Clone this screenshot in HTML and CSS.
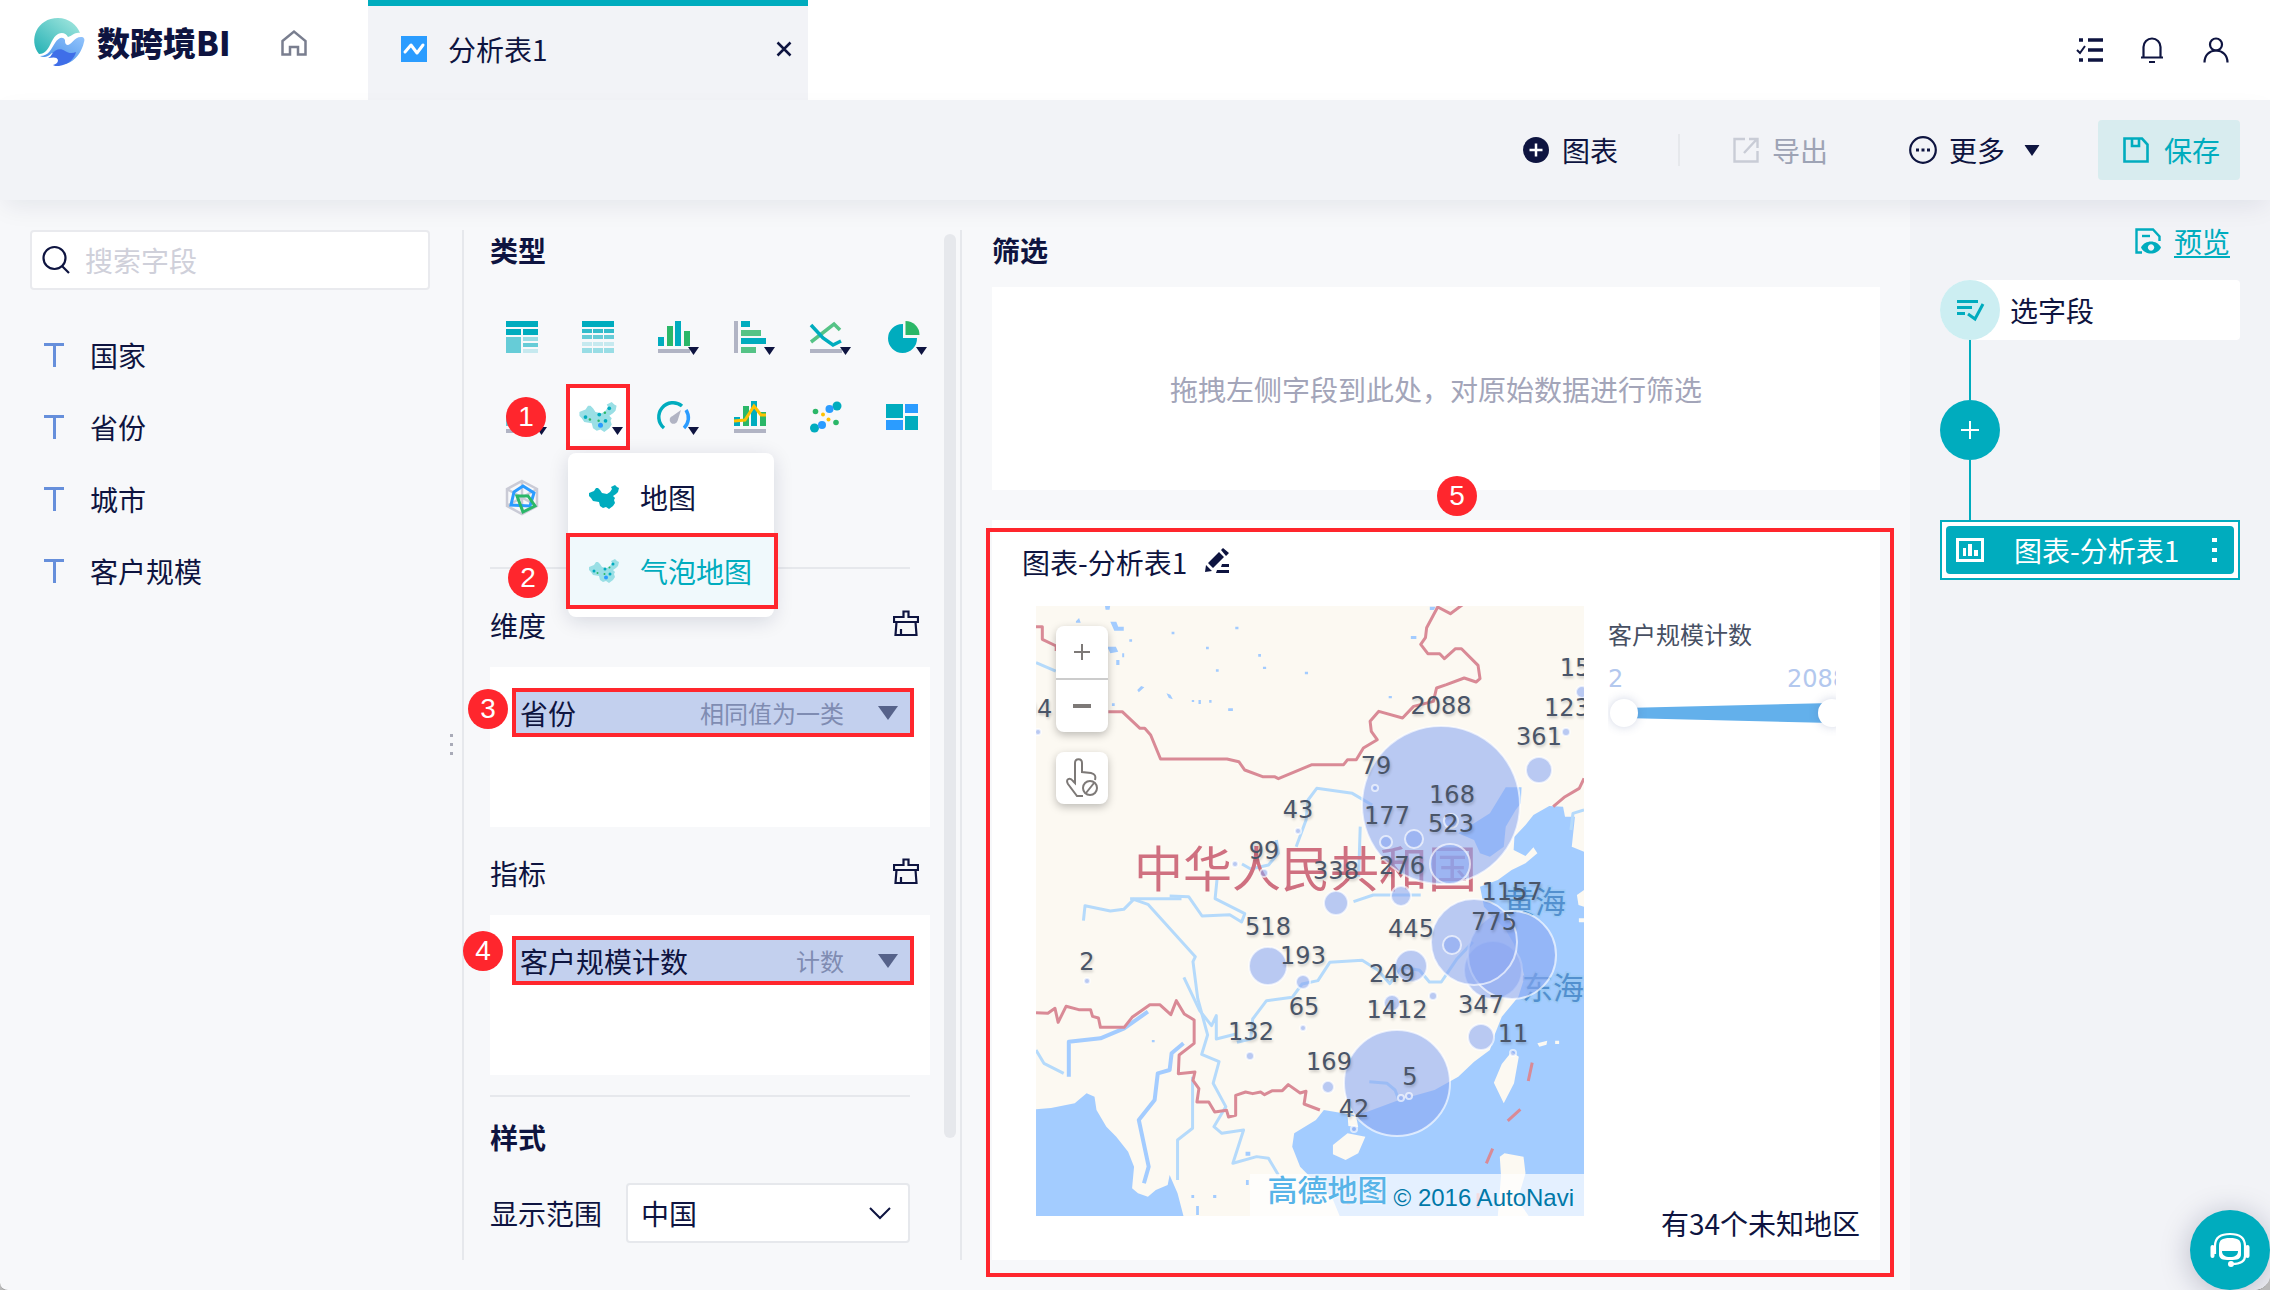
FILE: index.html
```html
<!DOCTYPE html>
<html lang="zh-CN">
<head>
<meta charset="utf-8">
<title>分析表1 - 数跨境BI</title>
<link rel="stylesheet" href="styles.css">
</head>
<body>
<svg class="defs" aria-hidden="true">
  <symbol id="china" viewBox="0 0 30 24"><path d="M0 8 5 6 7 3 9 3 11 5 13 8 18 9 21 7 23 4 22 2 26 0 28 2 30 3 29 7 27 9 24 11 26 13 25 15 26 18 24 21 20 24 17 22 14 23 11 21 10 17 4 16 2 13 0 11Z"/></symbol>
  <symbol id="bubbles" viewBox="0 0 30 24"><use href="#china" width="30" height="24" fill="#9adfe5"/><g fill="#00acbe"><circle cx="5" cy="12" r="1.500"/><circle cx="16" cy="10" r="1.500"/><circle cx="24" cy="5" r="1.500"/><circle cx="21" cy="15" r="1.500"/></g><g fill="#2bb768"><circle cx="8.500" cy="14" r="1"/><circle cx="20.500" cy="8.500" r="1"/><circle cx="15.500" cy="15" r="1"/></g><circle cx="17" cy="18.500" r="2" fill="#2b9cff"/></symbol>
  <symbol id="brush" viewBox="0 0 26 26"><path d="M10.500 7V1.500h5V7H25v5H1V7ZM3.500 12 2.500 25h21l-1-13M8 25v-6" fill="none" stroke="#0e1440" stroke-width="2.200"/></symbol>
  <symbol id="caret" viewBox="0 0 11 8"><path d="M0 0h11L5.500 8Z" fill="#0e1440"/></symbol>
</svg>
<div class="app">
  <header class="topbar">
    <div class="brand">
      <svg width="50" height="48" viewBox="0 0 50 48" aria-hidden="true">
        <defs>
          <linearGradient id="lg1" x1="0" y1="1" x2="1" y2="0"><stop offset="0" stop-color="#22b0b4"/><stop offset="1" stop-color="#a9e9e0"/></linearGradient>
          <linearGradient id="lg2" x1="0" y1="1" x2="1" y2="0"><stop offset="0" stop-color="#3f8be6"/><stop offset="1" stop-color="#93c4fc"/></linearGradient>
        </defs>
        <path d="M24 0C35 0 43 7 46 15c-5-1-8 3-12 4-2-4-6-5-10-3-6 3-7 12-12 17-2 2-4 3-7 3C-6 22 3 0 24 0Z" fill="url(#lg1)"/>
        <path d="M6 38c9 0 11-7 15-13 3-5 8-7 10-3 0 2 0 4 2 5 5 0 7-8 14-8 3 0 4 2 3 5-2 9-8 19-18 22l-4-8-10-3c-4 4-8 5-12 3Z" fill="url(#lg2)"/>
        <path d="M18 36c3-5 9-6 13-3 3 2 7 3 11 1-1 6-8 13-17 14-3 0-5 0-6-1 3-1 5-2 5-5-1-3-4-3-10-2 2-1 3-2 4-4Z" fill="#3f6ee8"/>
      </svg>
      <span class="brand-name">数跨境BI</span>
    </div>
    <a class="home" href="#" aria-label="首页"><svg width="26" height="26" viewBox="0 0 26 26"><path d="M1.500 11 13 1.500 24.500 11v13.500H17V17H9v7.500H1.500Z" fill="none" stroke="#797e8f" stroke-width="2.500"/></svg></a>
    <div class="tab">
      <svg width="26" height="26" viewBox="0 0 26 26"><path d="M0 0h26v26H0Z" fill="#2b9cff"/><path d="m4 16 6-7 6 8 6-8" fill="none" stroke="#fff" stroke-width="3" stroke-linecap="round" stroke-linejoin="round"/></svg>
      <span>分析表1</span>
      <button class="close" aria-label="关闭"><svg width="16" height="16" viewBox="0 0 16 16"><path d="m1.500 1.500 13 13m0-13-13 13" stroke="#0e1440" stroke-width="2.500"/></svg></button>
    </div>
    <nav class="tools">
      <button aria-label="任务"><svg width="26" height="26" viewBox="0 0 26 26" fill="none" stroke="#0e1440"><path d="M11 3h15M11 13h15M11 23h15" stroke-width="3.500"/><path d="M2 3h4M2 23h4" stroke-width="3.500"/><path d="m0 13 3 3 5-7" stroke-width="2"/></svg></button>
      <button aria-label="通知"><svg width="26" height="26" viewBox="0 0 26 26" fill="none" stroke="#0e1440" stroke-width="2.200"><path d="M1 20.500h22M3.500 20V10a8.500 8.500 0 0 1 17 0v10M9 25h6"/></svg></button>
      <button aria-label="用户"><svg width="26" height="26" viewBox="0 0 26 26" fill="none" stroke="#0e1440" stroke-width="2.200"><circle cx="13" cy="7.500" r="6"/><path d="M1.500 25.500c0-7.500 5-12 11.500-12s11.500 4.500 11.500 12"/></svg></button>
    </nav>
  </header>

  <div class="toolbar">
    <button class="tb add"><svg width="26" height="26" viewBox="0 0 26 26"><circle cx="13" cy="13" r="13" fill="#0e1440"/><path d="M13 6.500v13M6.500 13h13" stroke="#fff" stroke-width="2.500"/></svg>图表</button>
    <span class="tb-sep"></span>
    <button class="tb export" disabled><svg width="26" height="26" viewBox="0 0 26 26" fill="none" stroke="#c9ccd6" stroke-width="2.400"><path d="M12 2H1.500v22.500H24.500V14M16 2h8.500v9M24 2 11 16"/></svg>导出</button>
    <button class="tb more"><svg width="28" height="28" viewBox="0 0 28 28"><circle cx="14" cy="14" r="12.800" fill="none" stroke="#0e1440" stroke-width="2.200"/><path d="M7 12.500h3v3H7Zm5.500 0h3v3h-3Zm5.500 0h3v3h-3Z" fill="#0e1440"/></svg>更多<svg class="more-caret" width="16" height="11" viewBox="0 0 11 8"><use href="#caret"/></svg></button>
    <button class="save"><svg width="26" height="26" viewBox="0 0 26 26" fill="none" stroke="#00acbe" stroke-width="2.600"><path d="M1.500 1.500H19l5.500 6v17h-23ZM9 2v7h7V2"/></svg>保存</button>
  </div>

  <main class="workspace">
    <aside class="fields">
      <label class="search"><svg width="28" height="28" viewBox="0 0 28 28" fill="none" stroke="#0e1440" stroke-width="2.200"><circle cx="12.500" cy="12" r="11"/><path d="m20 20 7 7"/></svg><input type="text" placeholder="搜索字段" aria-label="搜索字段"></label>
      <ul>
        <li><i></i>国家</li>
        <li><i></i>省份</li>
        <li><i></i>城市</li>
        <li><i></i>客户规模</li>
      </ul>
      <span class="splitter"></span>
    </aside>

    <section class="config">
      <div class="config-body">
        <h2>类型</h2>
        <div class="types">
          <button aria-label="透视表"><svg viewBox="0 0 32 32"><path d="M0 0h32v6H0Zm0 8h15v6H0Zm17 0h15v6H17Z" fill="#00acbe"/><path d="M0 16h15v16H0Z" fill="#66ccd7"/><path d="M17 16h15v4H17Z" fill="#99dde5"/><path d="M17 22h15v4H17Z" fill="#66ccd7"/><path d="M17 28h15v4H17Z" fill="#c6e9ef"/></svg></button>
          <button aria-label="明细表"><svg viewBox="0 0 32 32"><path d="M0 0h32v6H0Z" fill="#00acbe"/><path d="M0 8h10v4H0Zm11 0h10v4H11Zm11 0h10v4H22Z" fill="#33bccb"/><path d="M0 14h10v4H0Zm11 0h10v4H11Zm11 0h10v4H22Z" fill="#66ccd7"/><path d="M0 21h10v4H0Zm11 0h10v4H11Zm11 0h10v4H22Z" fill="#c6e9ef"/><path d="M0 27h10v5H0Zm11 0h10v5H11Zm11 0h10v5H22Z" fill="#99dde5"/></svg></button>
          <button aria-label="柱状图"><svg viewBox="0 0 32 32"><path d="M0 28h32v4H0Z" fill="#b1b4c4"/><path d="M0 16h6v9H0ZM17 0h6v25h-6Z" fill="#00acbe"/><path d="M9 5h6v20H9Zm17 5h6v15h-6Z" fill="#2bb768"/><use href="#caret" x="30" y="26" width="11" height="8"/></svg></button>
          <button aria-label="条形图"><svg viewBox="0 0 32 32"><path d="M0 0h4v32H0Z" fill="#b1b4c4"/><path d="M7 0h9v6H7Zm0 17h25v6H7Z" fill="#00acbe"/><path d="M7 9h20v6H7Zm0 17h15v6H7Z" fill="#55c386"/><use href="#caret" x="30" y="26" width="11" height="8"/></svg></button>
          <button aria-label="折线图"><svg viewBox="0 0 32 32"><path d="M0 28h32v4H0Z" fill="#b1b4c4"/><path d="M1 21 24 3l6 6" fill="none" stroke="#55c386" stroke-width="3.500"/><path d="m1 4 12 13 10 7 8-4" fill="none" stroke="#00acbe" stroke-width="3.500"/><use href="#caret" x="30" y="26" width="11" height="8"/></svg></button>
          <button aria-label="饼图"><svg viewBox="0 0 32 32"><path d="M17 3v14h14A14.500 14.500 0 1 1 17 3Z" fill="#00acbe"/><path d="M19.500 0A14 14 0 0 1 33.500 14h-14Z" fill="#2bb768"/><use href="#caret" x="30" y="26" width="11" height="8"/></svg></button>
          <button aria-label="面积图"><svg viewBox="0 0 32 32"><path d="M0 28h32v4H0Z" fill="#b1b4c4"/><path d="M0 25V14l10-8 12 9 10-6v16Z" fill="#66ccd7"/><use href="#caret" x="30" y="26" width="11" height="8"/></svg><span class="badge b1">1</span></button>
          <button class="selected" aria-label="地图"><svg viewBox="0 0 32 32"><use href="#bubbles" x="-3" y="1" width="38" height="30"/><use href="#caret" x="30" y="26" width="11" height="8"/></svg></button>
          <button aria-label="仪表盘"><svg viewBox="0 0 32 32"><path d="M6 27A14 14 0 0 1 24 5" fill="none" stroke="#00acbe" stroke-width="3.500"/><path d="M28 9a14 14 0 0 1-2 18" fill="none" stroke="#2b9cff" stroke-width="3.500"/><path d="m23 9-3.500 11a4 4 0 1 1-5-5Z" fill="#b1b4c4"/><use href="#caret" x="30" y="26" width="11" height="8"/></svg></button>
          <button aria-label="组合图"><svg viewBox="0 0 32 32"><path d="M0 28h32v4H0Z" fill="#b1b4c4"/><path d="M0 16h6v9H0ZM17 0h6v25h-6Z" fill="#00acbe"/><path d="M9 5h6v20H9Zm17 6h6v14h-6Z" fill="#2bb768"/><path d="m0 20 11-1 9-14 7 9h5" fill="none" stroke="#ffc100" stroke-width="3"/></svg></button>
          <button aria-label="散点图"><svg viewBox="0 0 32 32"><g fill="#00acbe"><circle cx="27" cy="5" r="4.500"/><circle cx="4.500" cy="27" r="4.500"/></g><g fill="#2b9cff"><circle cx="19.500" cy="8" r="4"/><circle cx="12" cy="24" r="4"/></g><g fill="#2bb768"><circle cx="5.500" cy="10.500" r="2.800"/><circle cx="26" cy="21.500" r="2.800"/></g><g fill="#ffc100"><circle cx="13" cy="13.500" r="2"/><circle cx="18.500" cy="18.500" r="2"/></g></svg></button>
          <button aria-label="树图"><svg viewBox="0 0 32 32"><path d="M0 3h17v14H0Zm19 12h13v14H19Z" fill="#00acbe"/><path d="M19 3h13v9H19ZM0 19h17v10H0Z" fill="#2b9cff"/></svg></button>
          <button aria-label="雷达图"><svg viewBox="0 0 32 32" fill="none"><path d="M16 0 31 8v17l-15 8L1 25V8ZM16 0v33M1 8l30 17M31 8 1 25" stroke="#cacbd6" stroke-width="2.500"/><path d="m17 5 11 7-4 13-19-1L8 11Z" stroke="#2b9cff" stroke-width="3"/><path d="m11 15 11 0 7 10-12 6Z" stroke="#2bb768" stroke-width="3"/></svg></button>
        </div>
        <div class="menu">
          <button class="menu-item"><svg width="30" height="24"><use href="#china" fill="#00acbe"/></svg>地图</button>
          <button class="menu-item active"><svg width="30" height="24"><use href="#bubbles"/></svg>气泡地图</button>
          <span class="badge b2">2</span>
        </div>
        <hr class="rule-a">
        <div class="drop-head first"><h3>维度</h3><button aria-label="清空维度"><svg width="26" height="26"><use href="#brush"/></svg></button></div>
        <div class="drop"><div class="chip"><span>省份</span><em>相同值为一类</em><svg width="20" height="14" viewBox="0 0 20 14"><path d="M0 0h20L10 14Z" fill="#56628a"/></svg><span class="badge b3">3</span></div></div>
        <div class="drop-head"><h3>指标</h3><button aria-label="清空指标"><svg width="26" height="26"><use href="#brush"/></svg></button></div>
        <div class="drop"><div class="chip"><span>客户规模计数</span><em>计数</em><svg width="20" height="14" viewBox="0 0 20 14"><path d="M0 0h20L10 14Z" fill="#56628a"/></svg><span class="badge b4">4</span></div></div>
        <hr class="rule-b">
        <h2>样式</h2>
        <div class="range-row">
          <label for="scope">显示范围</label>
          <div class="select"><select id="scope"><option>中国</option></select><svg width="22" height="12" viewBox="0 0 22 12"><path d="m1 1 10 10L21 1" fill="none" stroke="#0e1440" stroke-width="2"/></svg></div>
        </div>
      </div>
      <span class="thumb"></span>
    </section>

    <section class="canvas">
      <h2>筛选</h2>
      <div class="filter">拖拽左侧字段到此处，对原始数据进行筛选</div>
      <article class="chart">
        <span class="badge b5">5</span>
        <div class="chart-head"><h3>图表-分析表1</h3><button aria-label="重命名"><svg width="26" height="26" viewBox="0 0 26 26" fill="#0e1440"><path d="M3 15 14 4l5 5L8 20ZM16 2l2-2 6 5-3 3ZM0 24l1-7 6 6ZM12 22h12v3H11ZM17 16h7v3h-8Z"/></svg></button></div>
        <div class="chart-body">
          <div class="map">
            <svg class="tiles" viewBox="0 0 548 610" aria-label="客户规模气泡地图">
              <g transform="translate(-56.150 274) scale(.3954 .3333)" class="geo">
                <g fill="#a3ccff">
                  <path d="M142 688 180 684 240 670 270 640 290 650 295 690 320 740 345 770 375 815 390 860 385 925 400 940 425 950 445 930 475 915 480 885 500 940 515 1008H142Z"/>
                  <path d="M1528-85 1497-100 1505-190 1480-190 1475-220 1440-222 1400-195 1380-165 1352-130 1350-90 1380-72 1400-98 1410-80 1380-50 1345-30 1310 0 1265 20 1275 80 1330 150 1350 190 1365 240 1378 290 1362 350 1320 410 1300 470 1290 510 1250 545 1210 590 1150 630 1060 660 980 695 945 705 870 690 850 720 795 760 790 800 810 860 860 920 890 950 910 1008H1528Z"/>
                  <path d="M1330-278 1370-278 1368-230 1355-210 1330-160 1325-100 1290-70 1265-80 1250-120 1210-140 1250-170 1290-200Z"/>
                  <path d="M330-775h15l5 15h14v12h-24ZM316-826h14l-2 15h-10ZM243-776l8-10 4 14h-12ZM322-700h22l6 15-20 5ZM398-570l10-12 8 4-14 15ZM472-560l10 4 6 14-10-4ZM345-660h8v15h-8ZM360-680h5v12h-5ZM1090-732h14v9h-14ZM1138-820h15l-5 10h-10ZM628-515h12v8h-12ZM553-540h6v12h-6ZM646-760h8v8h-8ZM572-700h7v8h-7ZM704-678h7v8h-7ZM716-640h8v7h-8ZM597-632h7v7h-7ZM822-625h8v8h-8ZM485-745h7v8h-7ZM378-722h7v7h-7ZM536-540h6v6h-6ZM580-540h6v8h-6ZM1034-552h8v7h-8ZM334-530h7v8h-7ZM547 978h7v27h-7ZM535 945h7v9h-7ZM590 945h8v9h-8ZM672 815h12v12h-12ZM673 900h7v15h-7ZM435 480h7v7h-7Z"/>
                </g>
                <g fill="#fcf9f2">
                  <path d="m893 795 37-35 45 10-18 50-32 20-32-17ZM930 705l22 5 5 32-25-4ZM1345 515l18 15-12 80-26 60-25-62 20-56ZM1315 830l12-10 48 10 5 50-20 80 28 48h-78l8-120ZM1410 490l25-8-2 12-18 6ZM1455 482h10v10h-10ZM1510 45l18-15v50l-14-5ZM1515 115h13v12h-13Z"/>
                </g>
                <g class="river">
                  <path d="m262 122 4-45 64 16 34-5 25-30 36 15L545 230l-6 15 12 110 25 110-15 58 44 22-15 65 32 70-30 60 20 20 55-10-27 100 60-20 30 5 25 50"/>
                  <path d="m480 48 48 2 34 58 70-4 30 22 8-25-75-45 5-60"/>
                  <path d="m516 292 40 100 30 45 12-30v70l50-15M650 487l35-10 5-60 35-55 65-10 25-40 40-10 30-55 82-6 40 30 30 40 30-50 45 10 25 35h30l40-70 40-50"/>
                  <path d="m800-100 25-80 5-60 22-35 90 15 50 35M958-10l4-150M750-120l5 40-25 35-45 12-22-15M945 65l50-20h120M380 56h130"/>
                  <path d="m142-652 50 25M1495-150l5-50 28-10M142 510l20 40 50 30M500 900V780l38-35V590M985 605l45 5 20 20 10 30"/>
                  <path class="wide" d="m225 590 0-105 80-10 60-30 60-50M415 910l12-50-25-140 40-60 8-80 30-10 5-50 30-30"/>
                </g>
                <g class="border">
                  <path d="M142-760h16v38l35 20v15M325-505h35l45 50h12l15 20 25 72h168l30 8 15 25 45 20h30l10 6 85-42h80l10-15h22l18-35 35-25-15-25-3-30 22-30 60 20 28-35 50-15 8-40 25-10 45-20 30 12 10-10-5-40-42-50h-15l-28 30-12-15h-30l-18-28 12-20 3-30 28-62 32 20 40-35h25"/>
                  <path d="m142 398 30 2 18-15 8 42 20-48 32 10h30l5 20 15 5 5 28h60l20-30 45-38h25l28 30 14-42 20 40 25 18v70l-38 35-2 56 42-5-5 25 15 25-5 40h30l15 30 30-5 5 20 18-5v-60l25-10 18 5 20-5 10 8 20-12h25l15-18 30 25 15-5-5 38 40 18"/>
                  <path d="m1528-305-12 30-36 25-30 30M1397 548l-10 55M1367 688l-32 35M1297 806l-16 44M932 960v15M1260 940v45"/>
                </g>
              </g>
              <g class="place">
                <text x="98" y="281" class="country">中华人民共和国</text>
                <text x="468" y="307" class="sea">黄海</text>
                <text x="486" y="393" class="sea">东海</text>
              </g>
              <g class="bubble">
                <circle cx="405" cy="199" r="79"/><circle cx="339" cy="182" r="3"/><circle cx="415" cy="215" r="7"/><circle cx="350" cy="236" r="6"/><circle cx="378" cy="233" r="9"/><circle cx="414" cy="258" r="20"/><circle cx="503" cy="164" r="13"/><circle cx="530" cy="126" r="4"/><circle cx="546" cy="86" r="6"/><circle cx="2" cy="126" r="3"/><circle cx="262" cy="225" r="3"/><circle cx="199" cy="258" r="3"/><circle cx="228" cy="267" r="4"/><circle cx="300" cy="297" r="12"/><circle cx="365" cy="290" r="10"/>
                <circle cx="457" cy="364" r="29"/><circle cx="476" cy="349" r="44"/><circle cx="438" cy="336" r="43"/><circle cx="416" cy="339" r="9"/><circle cx="232" cy="360" r="19"/><circle cx="267" cy="376" r="7"/><circle cx="375" cy="360" r="16"/><circle cx="356" cy="397" r="8"/><circle cx="397" cy="390" r="4"/><circle cx="51" cy="375" r="3"/><circle cx="267" cy="422" r="3"/><circle cx="214" cy="450" r="4"/><circle cx="445" cy="431" r="13"/><circle cx="477" cy="447" r="3"/><circle cx="361" cy="477" r="53"/><circle cx="292" cy="481" r="6"/><circle cx="365" cy="492" r="3"/><circle cx="373" cy="490" r="3"/><circle cx="318" cy="523" r="3"/>
              </g>
              <g class="value">
                <text x="405" y="108">2088</text><text x="340" y="168">79</text><text x="416" y="197">168</text><text x="351" y="218">177</text><text x="415" y="226">523</text><text x="262" y="212">43</text><text x="228" y="253">99</text><text x="300" y="273">338</text><text x="366" y="268">276</text><text x="503" y="139">361</text><text x="539" y="70">15</text><text x="531" y="110">123</text><text x="1" y="111">94</text><text x="476" y="294">1157</text><text x="458" y="324">775</text><text x="232" y="329">518</text><text x="375" y="331">445</text><text x="267" y="358">193</text><text x="51" y="364">2</text><text x="356" y="376">249</text><text x="361" y="412">1412</text><text x="445" y="407">347</text><text x="268" y="409">65</text><text x="477" y="436">11</text><text x="215" y="434">132</text><text x="293" y="464">169</text><text x="374" y="479">5</text><text x="318" y="511">42</text>
              </g>
            </svg>
            <div class="map-tools">
              <div class="zoom">
                <button aria-label="放大"><svg width="16" height="18" viewBox="0 0 16 18"><path d="M8 1v16M0 9h16" stroke="#7d7977" stroke-width="2"/></svg></button>
                <button aria-label="缩小"><svg width="18" height="18" viewBox="0 0 18 18"><path d="M0 9h18" stroke="#7d7977" stroke-width="4"/></svg></button>
              </div>
              <button class="hand" aria-label="禁用拖动"><svg width="32" height="40" viewBox="0 0 32 40" fill="none" stroke="#7d7977" stroke-width="2"><path d="M17 38H11L2 26c-3-5 2-7 5-3l2 2V5c0-5 7-5 7 0v9l9 1c4 1 5 3 4 7"/><circle cx="24" cy="30" r="7"/><path d="m20 35 8-10"/></svg></button>
            </div>
            <div class="credit"><span>高德地图</span><a href="#">© 2016 AutoNavi</a></div>
          </div>
          <div class="side-info">
            <div class="legend">
              <h4>客户规模计数</h4>
              <div class="legend-values"><span>2</span><span>2088</span></div>
              <div class="legend-range">
                <div class="wedge"></div>
                <input type="range" min="2" max="2088" value="2" aria-label="最小值">
                <input type="range" min="2" max="2088" value="2088" aria-label="最大值">
              </div>
            </div>
            <p>有34个未知地区</p>
          </div>
        </div>
      </article>
    </section>

    <aside class="steps">
      <div class="preview"><svg width="26" height="26" viewBox="0 0 26 26"><path d="M7 24.500H1.500v-23H18l6.500 7V13" fill="none" stroke="#00acbe" stroke-width="2.400"/><path d="M7 8h8" stroke="#00acbe" stroke-width="2.400"/><path d="M6 19.500c4-8 16-8 20 0-4 8-16 8-20 0Zm10-3.200a3.200 3.200 0 1 0 .1 0Z" fill="#00acbe" fill-rule="evenodd"/></svg><a href="#">预览</a></div>
      <button class="step pick"><span class="dot"><svg width="28" height="20" viewBox="0 0 28 20" fill="none" stroke="#00acbe" stroke-width="3"><path d="M1 1.500h21M1 7.500h15M1 13.500h8M12 14l7 5 8-15"/></svg></span>选字段</button>
      <span class="link"></span>
      <button class="step add-step" aria-label="添加步骤"><svg width="18" height="18" viewBox="0 0 18 18"><path d="M9 0v18M0 9h18" stroke="#fff" stroke-width="2"/></svg></button>
      <span class="link"></span>
      <button class="step current"><span class="current-in"><svg width="28" height="24" viewBox="0 0 28 24"><path d="M1.500 1.500h25v21h-25Z" fill="none" stroke="#fff" stroke-width="3"/><path d="M7 10h3v8H7Zm5-4h4v12h-4Zm6 6h4v6h-4Z" fill="#fff"/></svg><b>图表-分析表1</b><svg width="5" height="24" viewBox="0 0 5 24" fill="#fff"><path d="M0 0h5v4H0Zm0 10h5v4H0Zm0 10h5v4H0Z"/></svg></span></button>
    </aside>
  </main>
  <button class="help" aria-label="客服"><svg width="40" height="36" viewBox="0 0 40 36" fill="none" stroke="#fff"><path d="M5 22V14C5 5 11 2 20 2s15 3 15 12v10c0 6-5 8-13 8" stroke-width="2.200"/><path d="M2.500 15v9M37.500 15v9" stroke-width="4" stroke-linecap="round"/><path d="M9 14c0-6 3-8 11-8s11 2 11 8v8c0 5-3 6-11 6S9 27 9 22Z" fill="#fff" stroke="none"/><path d="M12 19h16c0 4-3 6-8 6s-8-2-8-6Z" fill="#00acbe" stroke="none"/><circle cx="21" cy="32" r="3" fill="#fff" stroke="none"/></svg></button>
</div>
</body>
</html>
```
FILE: styles.css
```css
* { box-sizing: border-box; }
body {
  margin: 0;
  background: #b9b9b9;
  color: #0e1440;
  font: 28px/40px "Noto Sans CJK SC", sans-serif;
}
button {
  display: flex;
  align-items: center;
  margin: 0;
  padding: 0;
  border: 0;
  background: none;
  color: inherit;
  font: inherit;
}
svg { flex: none; overflow: visible; }
.defs { position: absolute; width: 0; height: 0; }
h2, h3, h4, p, ul { margin: 0; padding: 0; }
h2 { font-size: 28px; line-height: 40px; font-weight: 700; }
h3 { font-size: 28px; line-height: 40px; font-weight: 400; }

.app {
  position: relative;
  display: flex;
  flex-direction: column;
  min-height: 100vh;
  overflow: hidden;
  background: #f7f8fa;
  border-bottom: 1px solid #989898;
  border-radius: 0 0 16px 8px;
}

/* top bar */
.topbar { display: flex; height: 100px; background: #fff; }
.brand { display: flex; align-items: center; gap: 13px; width: 281px; padding: 0 0 16px 34px; }
.brand-name { font-size: 33px; font-weight: 900; white-space: nowrap; }
.home { display: flex; align-items: center; width: 87px; padding-bottom: 15px; }
.tab {
  display: flex;
  align-items: center;
  gap: 21px;
  width: 440px;
  padding: 0 16px 8px 33px;
  background: #f2f3f7;
  border-top: 6px solid #00acbe;
}
.close { margin-left: auto; }
.tools { display: flex; align-items: center; gap: 37px; margin-left: auto; padding-right: 41px; }

/* action bar */
.toolbar {
  position: relative;
  display: flex;
  align-items: center;
  justify-content: flex-end;
  height: 100px;
  padding-right: 30px;
  background: #f2f3f7;
  box-shadow: 0 10px 24px -4px rgba(14, 20, 64, .08);
}
.tb { gap: 13px; }
.tb-sep { width: 2px; height: 32px; margin: 0 53px 0 60px; background: #e6e8ec; }
.export { color: #9ea3b5; }
.more { gap: 12px; margin: 0 58px 0 81px; }
.more-caret { margin-left: 7px; }
.save { gap: 15px; height: 60px; padding: 0 20px 0 25px; border-radius: 4px; background: #d8ecef; color: #00acbe; }

.workspace { display: grid; grid-template-columns: 462px 498px 1fr 360px; flex: 1; }

/* field list */
.fields { position: relative; padding: 30px 32px 30px 30px; }
.search { display: flex; align-items: center; gap: 15px; height: 60px; padding: 0 10px; border: 2px solid #e9eaee; border-radius: 4px; background: #fff; }
.search input { flex: 1; min-width: 0; padding: 0; border: 0; outline: 0; background: none; color: inherit; font: inherit; }
.search input::placeholder { color: #cfd0da; opacity: 1; }
.fields ul { margin-top: 29px; list-style: none; }
.fields li { display: flex; align-items: center; height: 72px; padding-left: 14px; gap: 26px; }
.fields i { width: 20px; height: 24px; background: linear-gradient(#668fdb, #668fdb) top / 100% 3px no-repeat, linear-gradient(#668fdb, #668fdb) center / 3px 100% no-repeat; }
.splitter { position: absolute; right: 9px; top: 534px; width: 3px; height: 21px; background: repeating-linear-gradient(#a9abb8 0 3px, transparent 3px 9px); }

/* chart configuration */
.config { display: flex; gap: 14px; margin: 30px 0; padding-left: 26px; border-left: 2px solid #e6e8ec; }
.config-body { position: relative; width: 440px; }
.thumb { width: 12px; height: 904px; margin-top: 4px; border-radius: 6px; background: #e6e8ec; }
.types { display: grid; grid-template-columns: repeat(6, 76px); grid-auto-rows: 80px; place-items: center; margin: 27px 0 0 -6px; }
.types button { position: relative; justify-content: center; width: 64px; height: 66px; }
.types svg { width: 32px; height: 32px; }
.types .selected { border: 4px solid #ff262d; background: #fff; }
.badge {
  position: absolute;
  width: 40px;
  height: 40px;
  border-radius: 50%;
  background: #ff262d;
  color: #fff;
  font: 28px/40px "Liberation Sans", sans-serif;
  text-align: center;
}
.b1 { left: 16px; top: 13px; }
.b2 { left: -60px; top: 105px; }
.b3 { left: -48px; top: -3px; }
.b4 { left: -53px; top: -9px; }
.b5 { left: 445px; top: -44px; }
.menu {
  position: absolute;
  z-index: 2;
  left: 78px;
  top: 223px;
  width: 206px;
  padding: 8px 0;
  border-radius: 8px;
  background: #fff;
  box-shadow: 0 4px 20px rgba(14, 20, 64, .14);
}
.menu-item { gap: 21px; width: 100%; height: 72px; padding-left: 21px; }
.menu-item.active { width: 212px; height: 76px; margin-left: -2px; padding-left: 19px; border: 4px solid #ff262d; background: #f0f9fc; color: #00acbe; }
hr { width: 420px; height: 2px; margin: 0; border: 0; background: #e6e8ec; }
.rule-a { margin-top: 30px; }
.rule-b { margin: 20px 0; }
.drop-head { display: flex; align-items: center; justify-content: space-between; margin: 26px 0 22px; padding-right: 11px; }
.drop-head.first { margin-top: 36px; }
.drop-head button { padding-bottom: 4px; }
.drop { height: 160px; padding: 21px 16px 0 22px; background: #fff; }
.chip { position: relative; display: flex; align-items: center; height: 49px; padding: 0 12px 0 4px; border: 4px solid #ff262d; background: #c3d0ee; }
.chip em { margin-left: auto; margin-right: 34px; color: #7f8cb2; font-size: 24px; font-style: normal; }
.range-row { display: flex; align-items: center; justify-content: space-between; width: 420px; margin-top: 26px; }
.select { position: relative; width: 284px; }
.select select { width: 100%; height: 60px; padding: 0 13px; border: 2px solid #e6e8ec; border-radius: 4px; appearance: none; background: #fff; color: inherit; font: inherit; }
.select svg { position: absolute; right: 19px; top: 24px; pointer-events: none; }

/* canvas */
.canvas { display: flex; flex-direction: column; margin: 30px 0; padding: 0 30px; border-left: 2px solid #e6e8ec; }
.filter { display: grid; place-items: center; height: 203px; margin: 17px 0 30px; background: #fff; color: #a3a5b9; }
.chart { position: relative; flex: 1; padding-top: 22px; background: #fff; }
.chart::after { content: ""; position: absolute; inset: 8px -14px -17px -6px; border: 4px solid #ff262d; pointer-events: none; }
.chart-head { display: flex; align-items: center; gap: 18px; padding-left: 30px; }
.chart-head button { padding-bottom: 2px; }
.chart-body { display: flex; gap: 24px; margin-top: 24px; padding: 0 20px 17px 44px; }
.map { position: relative; width: 548px; height: 610px; overflow: hidden; background: #fcf9f2; }
.tiles { display: block; width: 548px; height: 610px; }
.geo path { vector-effect: non-scaling-stroke; }
.river, .border { fill: none; stroke-linejoin: round; }
.river { stroke: #b5dafb; stroke-width: 3; }
.river .wide { stroke: #a3ccff; stroke-width: 4; }
.border { stroke: #d98a96; stroke-width: 3; }
.country { font-size: 49px; fill: #cf7080; }
.sea { font-size: 31px; fill: #5290cf; stroke: #9cc9f5; stroke-width: 3; paint-order: stroke; }
.bubble { fill: rgba(138, 166, 242, .59); stroke: rgba(255, 255, 255, .65); stroke-width: 2; }
.value { font: 24px "DejaVu Sans", sans-serif; fill: #4a5568; text-anchor: middle; text-shadow: 1px 2px 3px rgba(0, 0, 0, .2); }
.map-tools { position: absolute; left: 20px; top: 20px; width: 52px; }
.zoom, .hand { border-radius: 8px; background: #fff; box-shadow: 0 3px 8px rgba(0, 0, 0, .25); }
.zoom button { justify-content: center; width: 52px; height: 52px; }
.zoom button + button { height: 54px; border-top: 2px solid #ccc; }
.hand { justify-content: center; width: 52px; height: 52px; margin-top: 20px; }
.credit { position: absolute; right: 0; bottom: 0; display: flex; align-items: center; gap: 6px; height: 42px; padding: 0 10px 0 18px; background: rgba(255, 255, 255, .7); white-space: nowrap; }
.credit span { padding-bottom: 14px; color: #58b4e8; font-size: 30px; line-height: 30px; font-weight: 500; text-shadow: 0 0 3px #fff; }
.credit a { padding-top: 6px; color: #0078a8; font: 24px/36px "Liberation Sans", sans-serif; text-decoration: none; }

.side-info { display: flex; flex: 1; flex-direction: column; justify-content: space-between; min-height: 637px; }
.side-info p { text-align: right; }
.legend { width: 228px; padding-top: 8px; overflow: hidden; color: #475063; }
.legend h4 { font-size: 24px; line-height: 40px; font-weight: 400; }
.legend-values { display: flex; justify-content: space-between; width: 240px; margin-top: 5px; color: #b3c8ee; font: 24px/40px "DejaVu Sans", sans-serif; }
.legend-range { display: grid; align-items: center; width: 236px; height: 28px; margin: 0 0 20px 2px; }
.wedge { grid-area: 1 / 1; height: 20px; margin: 0 14px; background: #63b0eb; clip-path: polygon(0 25%, 100% 0, 100% 100%, 0 75%); }
.legend-range input { position: relative; z-index: 1; grid-area: 1 / 1; width: 100%; height: 28px; margin: 0; appearance: none; background: none; pointer-events: none; }
.legend-range input::-webkit-slider-thumb { width: 28px; height: 28px; border-radius: 50%; appearance: none; background: #fff; box-shadow: 0 0 10px rgba(70, 90, 150, .25); pointer-events: auto; }

/* steps */
.steps { padding: 21px 30px; background: #f2f3f7; }
.preview { display: flex; align-items: center; justify-content: flex-end; gap: 13px; margin-bottom: 19px; padding-right: 10px; }
.preview a { color: #00acbe; text-decoration-thickness: 2px; text-underline-offset: 3px; }
.step { height: 60px; }
.pick { gap: 10px; width: 100%; border-radius: 30px 4px 4px 30px; background: #fff; }
.dot { display: grid; place-items: center; width: 60px; height: 60px; border-radius: 50%; background: #cceef2; }
.link { display: block; width: 2px; height: 60px; margin-left: 29px; background: #00acbe; }
.add-step { justify-content: center; width: 60px; border-radius: 50%; background: #00acbe; }
.current { width: 100%; padding: 4px; border: 2px solid #00acbe; background: #fff; }
.current-in { display: flex; flex: 1; align-items: center; height: 48px; padding: 0 17px 0 10px; border-radius: 4px; background: #00acbe; color: #fff; }
.current-in b { margin: 0 auto 0 30px; font-weight: 400; }
.help { position: absolute; right: 0; bottom: 0; justify-content: center; width: 80px; height: 80px; border-radius: 50%; background: #00acbe; box-shadow: 0 4px 30px rgba(14, 20, 64, .25); }
```
